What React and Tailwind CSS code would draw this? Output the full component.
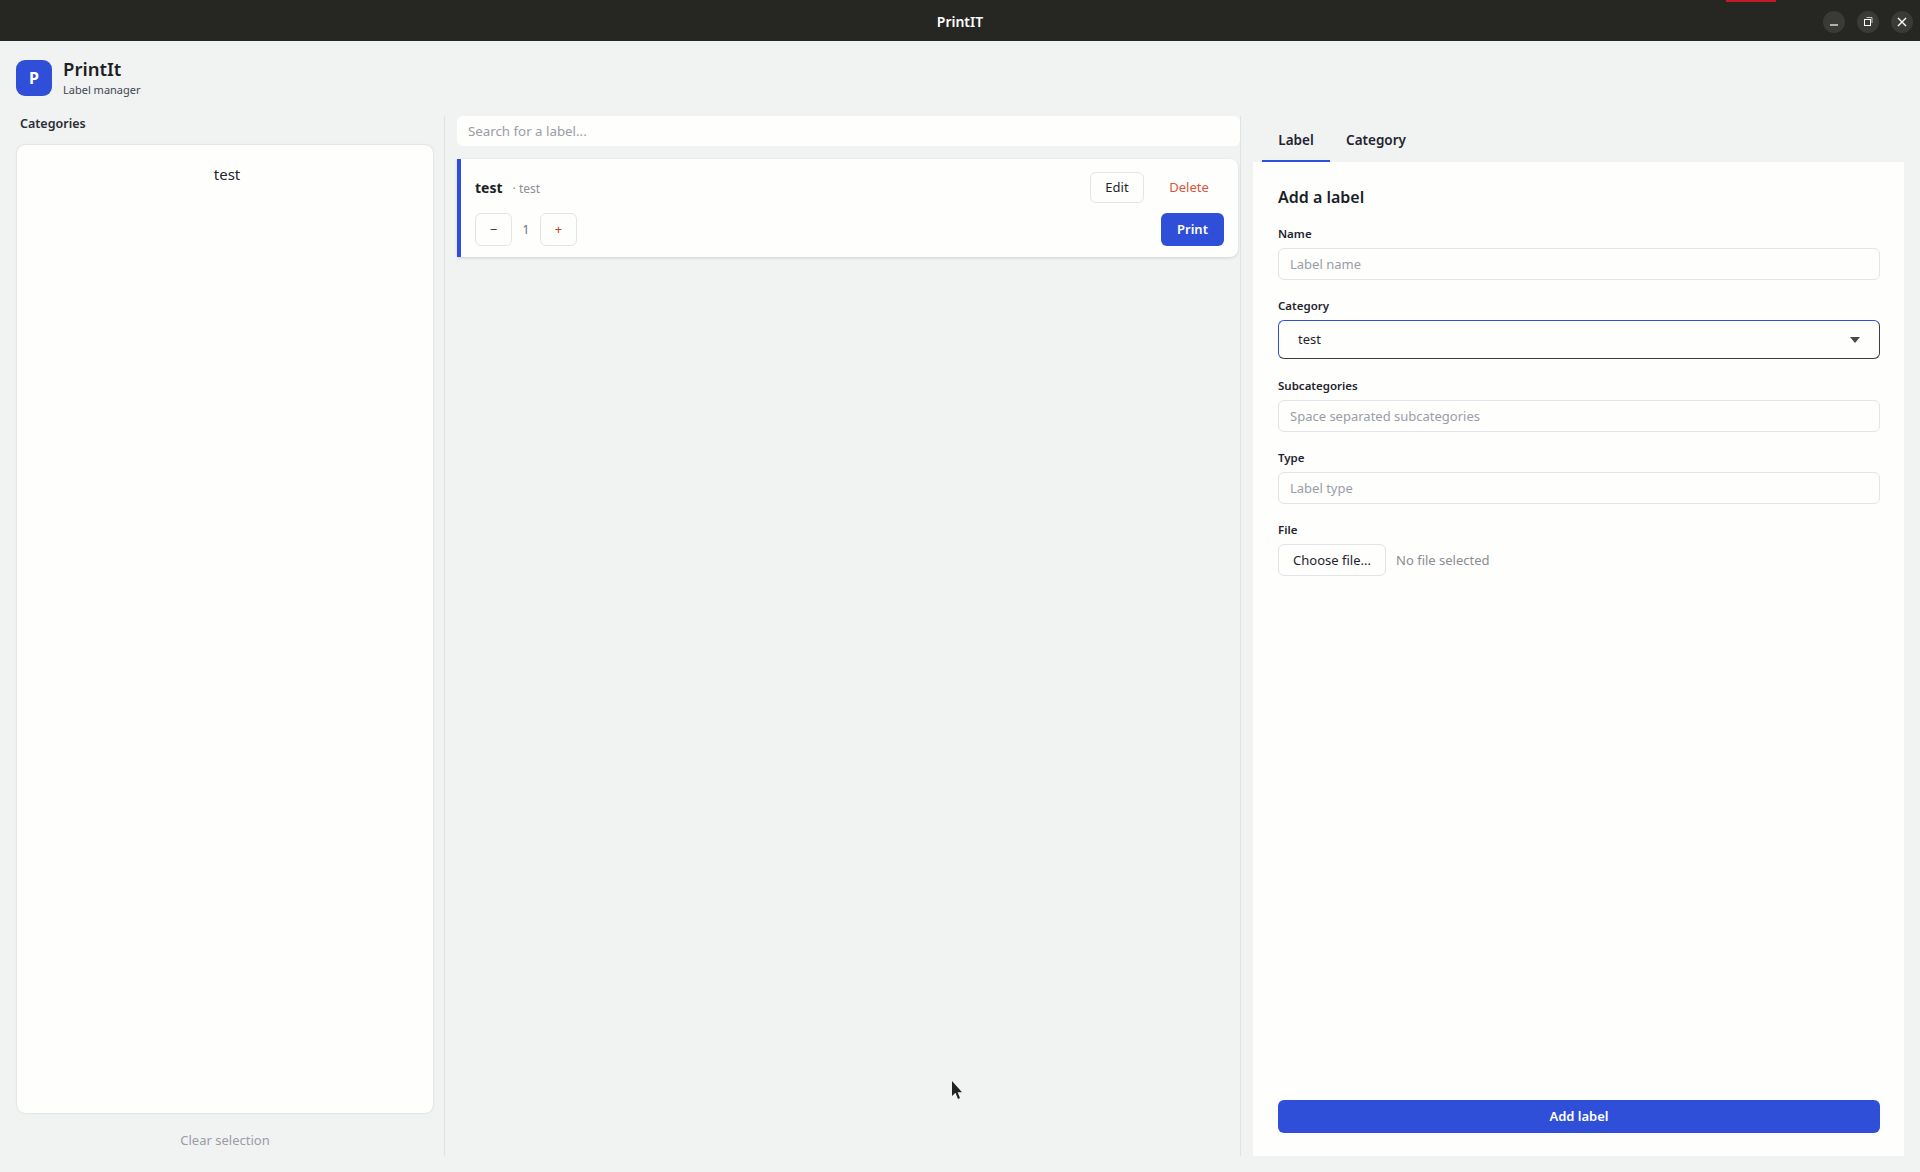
import React from "react";

const font = { fontFamily: '"Noto Sans", sans-serif' };

function Field({ label, placeholder, className = "" }) {
  return (
    <div className={`flex flex-col ${className}`}>
      <label className="text-[11.5px] leading-[16px] font-semibold text-[#1f2430] h-[16px] mb-[6px]">{label}</label>
      <input
        readOnly
        placeholder={placeholder}
        className="h-[32px] w-full rounded-[6px] border border-[#e3e4ea] bg-[#fefefd] px-[11px] text-[13px] outline-none placeholder:text-[#9a9da6]"
      />
    </div>
  );
}

function WinBtn({ children }) {
  return (
    <div className="flex h-[22px] w-[22px] items-center justify-center rounded-full bg-[#3a3a36] text-white">{children}</div>
  );
}

export default function App() {
  return (
    <div className="relative flex h-[1172px] w-[1920px] flex-col overflow-hidden bg-[#f1f2f2] text-[#1f2430]" style={font}>
      <div className="relative flex h-[41px] shrink-0 items-center justify-center bg-[#262623] pt-[2px]">
        <div className="absolute left-[1726px] top-0 h-[2px] w-[50px] bg-[#c01c28]" />
        <span className="text-[14px] font-semibold text-white">PrintIT</span>
        <div className="absolute right-[7px] top-[11px] flex gap-[12px]">
          <WinBtn>
            <svg width="12" height="12" viewBox="0 0 12 12"><path d="M2 9h8" stroke="currentColor" strokeWidth="1.2" /></svg>
          </WinBtn>
          <WinBtn>
            <svg width="12" height="12" viewBox="0 0 12 12" fill="none" stroke="currentColor"><rect x="2.5" y="3.5" width="6" height="6" /><path d="M4.5 1.5h5.5v5.5" strokeWidth="0.7" /></svg>
          </WinBtn>
          <WinBtn>
            <svg width="12" height="12" viewBox="0 0 12 12"><path d="M2 2l8 8M10 2l-8 8" stroke="currentColor" strokeWidth="1.4" /></svg>
          </WinBtn>
        </div>
      </div>

      <header className="flex h-[75px] shrink-0 items-start gap-[11px] pl-[16px] pt-[17px]">
        <div className="mt-[2px] flex h-[36px] w-[36px] items-center justify-center rounded-[9px] bg-[#2f4fd8] text-[16px] font-bold text-white">P</div>
        <div className="flex flex-col">
          <span className="text-[18.5px] leading-[22px] font-semibold text-[#1c1f26]">PrintIt</span>
          <span className="mt-[2px] text-[11px] leading-[16px] text-[#3f4552]">Label manager</span>
        </div>
      </header>

      <div className="flex min-h-0 flex-1 pb-[16px]">
        <aside className="flex w-[445px] shrink-0 flex-col border-r border-[#e0e1e3] pl-[17px] pr-[11px]">
          <h2 className="h-[29px] pl-[3px] text-[12.5px] leading-[15px] font-semibold text-[#2a2d34]">Categories</h2>
          <div className="h-[968px] w-[416px] rounded-[8px] bg-[#fefefc] shadow-[0_0_2px_rgba(0,0,0,0.18)]">
            <div className="pt-[18px] pl-[4px] text-center text-[15px] leading-[22px] text-[#1f2430]">test</div>
          </div>
          <button className="mt-[17px] w-[416px] text-center text-[13px] leading-[20px] text-[#9a9da6]">Clear selection</button>
        </aside>

        <main className="flex w-[796px] shrink-0 flex-col gap-[13px] border-r border-[#e0e1e3] pl-[12px] pr-[1px]">
          <input
            readOnly
            placeholder="Search for a label..."
            className="h-[30px] w-[783px] rounded-[6px] bg-[#fefefc] pl-[11px] pr-[10px] pb-[1px] text-[13.3px] outline-none placeholder:text-[#9a9da6]"
          />
          <div className="flex h-[98px] w-[781px] flex-col justify-between rounded-r-[8px] border-l-[4px] border-[#2f4fd8] bg-[#fefefc] pt-[13px] pb-[11px] pl-[14px] pr-[14px] shadow-[0_1px_3px_rgba(0,0,0,0.14)]">
            <div className="flex items-center justify-between">
              <div className="flex items-baseline gap-[10px] pb-[1px]">
                <span className="text-[14px] font-bold text-[#1c1f26]">test</span>
                <span className="text-[12px] text-[#8a8d95]">· test</span>
              </div>
              <div className="flex items-center gap-[13px] pr-[3px]">
                <button className="h-[31px] w-[54px] rounded-[6px] border border-[#e3e4ea] text-[13px] text-[#1f2430]">Edit</button>
                <button className="h-[31px] w-[64px] text-[13px] text-[#d9533f]">Delete</button>
              </div>
            </div>
            <div className="flex items-center justify-between">
              <div className="flex items-center">
                <button className="h-[33px] w-[37px] rounded-[6px] border border-[#e3e4ea] text-[13px] text-[#3a3d45]">−</button>
                <span className="w-[28px] text-center text-[12px] text-[#6b6e76]">1</span>
                <button className="h-[33px] w-[37px] rounded-[6px] border border-[#e3e4ea] text-[13px] text-[#c0392b]">+</button>
              </div>
              <button className="h-[33px] w-[63px] rounded-[6px] bg-[#2f4fd8] text-[13px] font-semibold text-white">Print</button>
            </div>
          </div>
        </main>

        <section className="flex min-w-0 flex-1 flex-col pl-[12px] pr-[16px]">
          <nav className="flex h-[46px] shrink-0 pl-[9px]">
            <div className="flex w-[68px] items-center justify-center border-b-2 border-[#2f4fd8] text-[13.5px] font-semibold pt-[5px]">Label</div>
            <div className="flex w-[92px] items-center justify-center text-[13.5px] font-semibold pt-[3px]">Category</div>
          </nav>
          <div className="flex flex-1 flex-col bg-[#fefefc] pl-[25px] pr-[24px] pt-[23px] pb-[23px]">
            <h3 className="h-[24px] text-[16px] leading-[24px] font-semibold text-[#1c1f26] mb-[17px]">Add a label</h3>
            <Field label="Name" placeholder="Label name" className="mb-[18px]" />
            <div className="mb-[19px] flex flex-col">
              <label className="h-[16px] mb-[6px] text-[11.5px] leading-[16px] font-semibold">Category</label>
              <div className="flex h-[39px] items-center justify-between rounded-[6px] border border-[#2f4fd8] border-b-[#3a3d45] border-r-[#3a3d45] pl-[19px] pr-[19px] text-[13px]">
                <span className="pt-[1px]">test</span>
                <svg width="10" height="6" viewBox="0 0 10 6"><path d="M0 0h10L5 6z" fill="#4a4a4a" /></svg>
              </div>
            </div>
            <Field label="Subcategories" placeholder="Space separated subcategories" className="mb-[18px]" />
            <Field label="Type" placeholder="Label type" className="mb-[18px]" />
            <div className="flex flex-col">
              <label className="h-[16px] mb-[6px] text-[11.5px] leading-[16px] font-semibold">File</label>
              <div className="flex items-center gap-[10px]">
                <button className="h-[32px] w-[108px] rounded-[6px] border border-[#e3e4ea] pt-[1px] text-[13px]">Choose file...</button>
                <span className="pt-[1px] text-[13px] text-[#8a8d95]">No file selected</span>
              </div>
            </div>
            <button className="mt-auto h-[33px] w-full rounded-[6px] bg-[#2f4fd8] text-[13px] font-semibold text-white">Add label</button>
          </div>
        </section>
      </div>

      <svg className="absolute left-[951px] top-[1081px]" width="12" height="19" viewBox="0 0 12 19">
        <path d="M1 0v15l3.5-3.2L7 18l2-1-2.4-5.8H11z" fill="#222" />
      </svg>
    </div>
  );
}
